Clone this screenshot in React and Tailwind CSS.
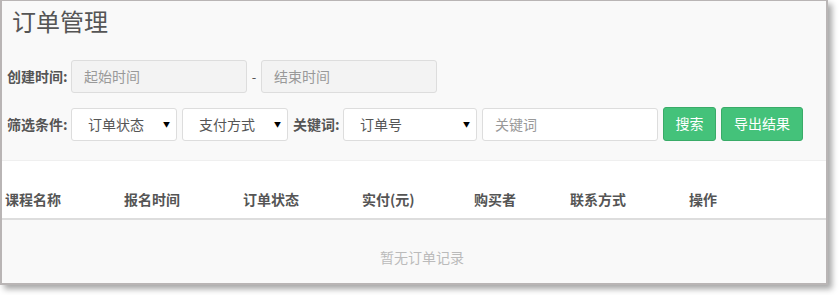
const font = { fontFamily: '"Noto Sans CJK SC", "Noto Sans", sans-serif' }

// ── Select (static look) ─────────────────────────────────────
function FakeSelect({ label, width }) {
  return (
    <div className={`${width} h-[33px] bg-white border border-[#dddddd] rounded-[3px] flex items-center justify-between pl-[16px] pr-[6px]`}>
      <span className="text-[14px] text-[#555]">{label}</span>
      <span className="text-[7px] text-black leading-none">▼</span>
    </div>
  )
}

const columns = [
  { name: '课程名称', w: 'w-[119px]' },
  { name: '报名时间', w: 'w-[119px]' },
  { name: '订单状态', w: 'w-[119px]' },
  { name: '实付(元)', w: 'w-[112px]' },
  { name: '购买者', w: 'w-[96px]' },
  { name: '联系方式', w: 'w-[119px]' },
  { name: '操作', w: 'w-[80px]' },
]

export default function App() {
  return (
    <div className="w-[839px] h-[295px] bg-white" style={font}>
      <div className="w-[828px] h-[285px] bg-[#f9f9f9] border-t border-l-2 border-r-2 border-b-2 border-[#b9b5b5] shadow-[4px_4px_6px_rgba(0,0,0,0.35)] flex flex-col">
        {/* Filters */}
        <div className="pb-[19px] border-b border-[#efefef]">
          <h1 className="pl-[10px] pt-[4px] text-[24px] leading-[32px] text-[#555]">订单管理</h1>

          <div className="mt-[23px] flex items-center pl-[5px]">
            <label className="w-[64px] text-[14px] font-bold text-[#555]">创建时间:</label>
            <div className="w-[176px] h-[33px] bg-[#f3f3f3] border border-[#dddddd] rounded-[3px] flex items-center pl-[12px] text-[14px] text-[#999]">起始时间</div>
            <span className="w-[14px] text-center text-[13px] text-[#555]">-</span>
            <div className="w-[176px] h-[33px] bg-[#f3f3f3] border border-[#dddddd] rounded-[3px] flex items-center pl-[12px] text-[14px] text-[#999]">结束时间</div>
          </div>

          <div className="mt-[15px] flex items-center pl-[5px] gap-[5px]">
            <label className="w-[59px] text-[14px] font-bold text-[#555] whitespace-nowrap">筛选条件:</label>
            <FakeSelect label="订单状态" width="w-[106px]" />
            <FakeSelect label="支付方式" width="w-[106px]" />
            <label className="w-[45px] text-[14px] font-bold text-[#555] whitespace-nowrap">关键词:</label>
            <FakeSelect label="订单号" width="w-[134px]" />
            <div className="w-[176px] h-[33px] bg-white border border-[#dddddd] rounded-[3px] flex items-center pl-[12px] text-[14px] text-[#999]">关键词</div>
            <button className="w-[53px] h-[34px] -mt-[2px] bg-[#44c27a] border border-[#39ab68] rounded-[3px] text-[14px] text-white">搜索</button>
            <button className="w-[82px] h-[34px] -mt-[2px] bg-[#44c27a] border border-[#39ab68] rounded-[3px] text-[14px] text-white">导出结果</button>
          </div>
        </div>

        {/* Table header */}
        <div className="bg-white h-[59px] flex items-end pl-[3px] pb-[9px] border-b-2 border-[#dddddd]">
          {columns.map((c) => (
            <div key={c.name} className={`${c.w} text-[14px] font-bold text-[#555] leading-[20px]`}>{c.name}</div>
          ))}
        </div>

        {/* Empty state */}
        <div className="flex-1 flex items-center justify-center pl-[16px] pt-[12px] text-[14px] text-[#bbb]">暂无订单记录</div>
      </div>
    </div>
  )
}
